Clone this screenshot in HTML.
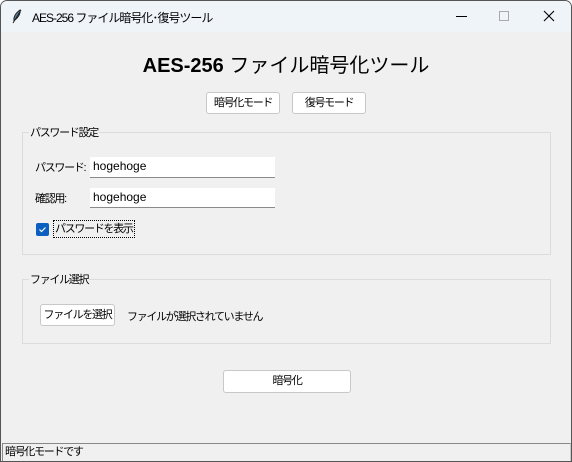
<!DOCTYPE html>
<html><head><meta charset="utf-8"><style>
*{margin:0;padding:0;box-sizing:border-box}
body{width:572px;height:462px;overflow:hidden;background:#fff;font-family:"Liberation Sans","Noto Sans CJK JP",sans-serif;font-size:11px;letter-spacing:-1.3px;color:#000}
.win{position:absolute;left:0;top:0;width:572px;height:462px;background:#f0f0f0;border:1px solid #555;border-radius:7px 7px 0 0;overflow:hidden}
.title{position:absolute;left:0;top:0;width:570px;height:31px;background:#eff4f9}
.abs{position:absolute;white-space:nowrap}
.btn{position:absolute;background:#fff;border:1px solid #c8c8c8;border-radius:3px;text-align:center;white-space:nowrap}
.frame{position:absolute;border:1px solid #dcdcdc}
.lbl{position:absolute;background:#f0f0f0;padding:0 1px}
.entry{position:absolute;background:#fff;border-bottom:1px solid #8a8a8a;font-size:12px;letter-spacing:0;padding-left:3px;line-height:19px}
</style></head><body>
<div class="win">
<div class="title">
<svg class="abs" style="left:10px;top:8px" width="12" height="15" viewBox="0 0 12 15"><path d="M2 14 L10 1 M3 12 Q2 6 9 1 Q10 6 4 11" stroke="#222" fill="#5a7fa8" stroke-width="1"/></svg>
<div class="abs" style="left:31px;top:8px;font-size:12px;letter-spacing:-1px">AES-256 ファイル暗号化･復号ツール</div>
<div class="abs" style="left:455px;top:15px;width:11px;height:1px;background:#000"></div>
<div class="abs" style="left:498px;top:10px;width:10px;height:10px;border:1px solid #aaa"></div>
<svg class="abs" style="left:542px;top:9px" width="12" height="12"><path d="M1 1L11 11M11 1L1 11" stroke="#000" stroke-width="1.1"/></svg>
</div>
<div class="abs" style="left:0;width:570px;top:53px;text-align:center;font-size:20px;letter-spacing:0;line-height:24px"><b>AES-256</b> ファイル暗号化ツール</div>
<div class="btn" style="left:205px;top:91px;width:74px;height:22px;line-height:20px">暗号化モード</div>
<div class="btn" style="left:291px;top:91px;width:74px;height:22px;line-height:20px">復号モード</div>
<div class="frame" style="left:21px;top:131px;width:529px;height:123px"></div>
<div class="lbl" style="left:28px;top:123px">パスワード設定</div>
<div class="abs" style="left:34px;top:158px">パスワード:</div>
<div class="entry" style="left:89px;top:156px;width:185px;height:21px">hogehoge</div>
<div class="abs" style="left:34px;top:189px">確認用:</div>
<div class="entry" style="left:89px;top:187px;width:185px;height:20px">hogehoge</div>
<div class="abs" style="left:35px;top:222px;width:13px;height:13px;background:#0a5fc0;border-radius:2px"><svg width="13" height="13"><path d="M3.5 6.5l2 2 4-4" stroke="#fff" fill="none" stroke-width="1.2"/></svg></div>
<div class="abs" style="left:52px;top:219px;border:1px dotted #000;padding:0 1px;line-height:16px">パスワードを表示</div>
<div class="frame" style="left:21px;top:278px;width:529px;height:65px"></div>
<div class="lbl" style="left:28px;top:270px">ファイル選択</div>
<div class="btn" style="left:39px;top:303px;width:75px;height:22px;line-height:20px">ファイルを選択</div>
<div class="abs" style="left:126px;top:307px">ファイルが選択されていません</div>
<div class="btn" style="left:222px;top:369px;width:128px;height:23px;line-height:21px">暗号化</div>
<div class="abs" style="left:1px;top:442px;width:569px;height:19px;border:1px solid #888;border-bottom-color:#fff;border-right-color:#ccc;line-height:17px;padding-left:2px">暗号化モードです</div>
</div>
</body></html>
